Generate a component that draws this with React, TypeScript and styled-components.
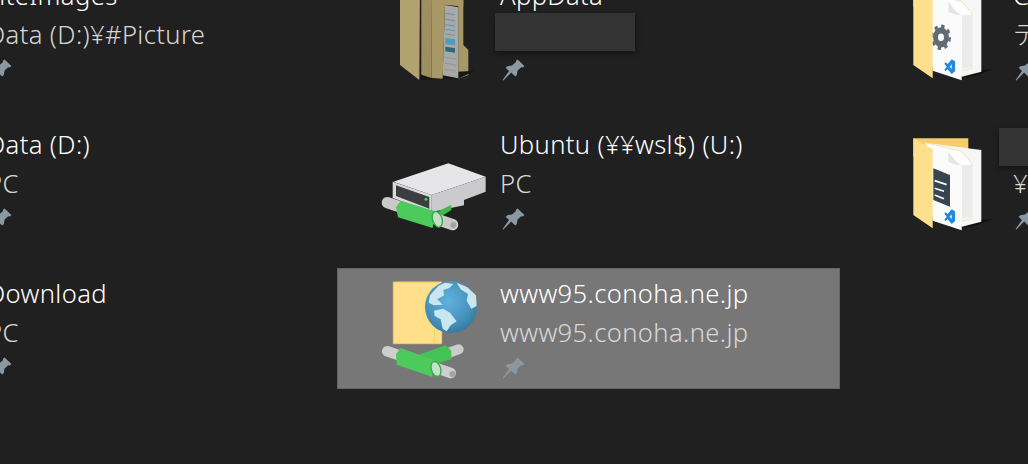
import React from "react";
import styled, { createGlobalStyle } from "styled-components";

const GlobalStyle = createGlobalStyle`
  html, body {
    margin: 0;
    height: 100%;
    background: #202020;
  }
`;

const Viewport = styled.div`
  width: 1028px;
  height: 464px;
  overflow: hidden;
  background: #202020;
  font-family: "Noto Sans", "Noto Sans CJK JP", sans-serif;
`;

const TileGrid = styled.div`
  display: grid;
  grid-template-columns: repeat(3, 503px);
  grid-auto-rows: 121px;
  gap: 28px 10px;
  margin: -30px 0 0 -176px;
`;

const Tile = styled.div<{ $selected?: boolean }>`
  box-sizing: border-box;
  display: flex;
  border: 1px solid ${(p) => (p.$selected ? "#646464" : "transparent")};
  background: ${(p) => (p.$selected ? "#777777" : "transparent")};
`;

const IconSlot = styled.svg`
  flex: none;
  width: 150px;
  height: 119px;
`;

const TileText = styled.div`
  display: flex;
  flex-direction: column;
  margin-left: 12px;
  padding-top: 7px;
`;

const Title = styled.div`
  position: relative;
  height: 39px;
  font-size: 25.6px;
  font-weight: 300;
  letter-spacing: 0.37px;
  line-height: 36px;
  color: #ffffff;
  white-space: nowrap;
`;

const Subtitle = styled(Title)<{ $selected?: boolean }>`
  color: ${(p) => (p.$selected ? "#d8d8d8" : "#d6d6d6")};
`;

const PinIcon = styled.svg`
  width: 23px;
  height: 23px;
  margin: 3px 0 0 2px;
  fill: #8a98a2;
`;

// patches that hide private names in the screenshot
const Redaction = styled.div<{ $width: number; $left: number; $top: number }>`
  position: absolute;
  left: ${(p) => p.$left}px;
  top: ${(p) => p.$top}px;
  width: ${(p) => p.$width}px;
  height: 38px;
  background: #333333;
  box-shadow: 0 2px 6px rgba(0, 0, 0, 0.45);
`;

const Pin = () => (
  <PinIcon viewBox="0 0 23 23">
    <path d="M15.6 0.4 22.4 7 20.8 8.4 19.2 8.2 15.6 11.6 14.8 16 13.2 17.6 9.2 13.6 1.4 21.6 0.6 21 7 12 3.6 8.8 5.4 7.2 10 6.6 14 3 13.9 1.8Z" />
  </PinIcon>
);

// the cable under a network location; drawn in the coordinates of the globe icon
const NetworkPipes = () => (
  <g>
    <path d="M280 300 386 262" stroke="#cbcbc9" strokeWidth="30" strokeLinecap="round" />
    <path d="M266 278 346 250 364 266 364 292 302 310 270 302Z" fill="#42c353" />
    <path d="M172 268 362 333" stroke="#cececc" strokeWidth="32" strokeLinecap="round" />
    <circle cx="367" cy="336" r="9" fill="#a4a4a2" />
    <path d="M212 258 318 296 306 344 200 308 198 276Z" fill="#4ccb5c" />
    <ellipse cx="318" cy="321" rx="14" ry="23" transform="rotate(-18 318 321)" fill="#c6dfc9" stroke="#2fae44" strokeWidth="4" />
  </g>
);

const NetworkDriveIcon = () => (
  <IconSlot viewBox="1 1 150 119">
    <g transform="translate(33 1) scale(0.3333)">
      <path d="M70 185 235 130 347 170 185 225Z" fill="#e6e6e8" />
      <path d="M185 225 347 170V215L282 240V256L185 276Z" fill="#cbcbce" />
      <path d="M68 185 185 225V276L68 234Z" fill="#d8d8da" />
      <path d="M78 196 178 231V266L78 228Z" fill="#3c3d40" />
      <circle cx="168" cy="238" r="4.5" fill="#2edb4a" />
      <path d="M190 282 244 254V270L200 298Z" fill="#3bbb4e" />
      <path d="M52 248 248 314" stroke="#cacac8" strokeWidth="34" strokeLinecap="round" />
      <circle cx="250" cy="315" r="9" fill="#a4a4a2" />
      <path d="M92 242 196 274 188 324 84 292 78 262Z" fill="#4ccb5c" />
      <ellipse cx="202" cy="298" rx="14" ry="24" transform="rotate(-18 202 298)" fill="#c6dfc9" stroke="#2fae44" strokeWidth="4" />
    </g>
  </IconSlot>
);

const SiteIcon = () => (
  <IconSlot viewBox="1 1 150 119">
    <defs>
      <radialGradient id="globe" cx="45%" cy="38%" r="70%">
        <stop offset="0" stopColor="#5fb3de" />
        <stop offset="0.65" stopColor="#4590ba" />
        <stop offset="1" stopColor="#2f7196" />
      </radialGradient>
    </defs>
    <g transform="translate(-7 -6) scale(0.3333)">
      <path d="M190 60H335V245H190Z" fill="#ffdf8a" stroke="#f5cb62" strokeWidth="3" />
      <path d="M314 190V244" stroke="#f1c862" strokeWidth="2" />
      <circle cx="363" cy="135" r="78" fill="url(#globe)" />
      <path d="M300 100 325 72 345 62 370 66 358 78 340 84 342 100 322 112 338 128 312 130 296 122Z" fill="#c9e6f1" />
      <path d="M312 146 340 140 360 152 380 178 362 190 350 208 338 200 332 172 314 162Z" fill="#c9e6f1" />
      <path d="M380 62 412 76 438 100 440 132 424 140 410 116 414 96 392 82Z" fill="#c9e6f1" />
      <NetworkPipes />
    </g>
  </IconSlot>
);

const DimFolderIcon = () => (
  <IconSlot viewBox="1 1 150 119">
    <g transform="translate(43 30) scale(0.3333)">
      <path d="M235 -60H250V135L265 150V225L235 236Z" fill="#a89866" />
      <path d="M118 222 285 212 235 236 118 240Z" fill="#161616" />
      <path d="M195 15 235 22V235L188 226Z" fill="#a8a9a7" />
      {[40, 58, 74, 88, 102].map((y) => (
        <path key={y} d={`M196 ${y} 225 ${y + 4}`} stroke="#4f93ad" strokeWidth="2.5" />
      ))}
      <path d="M196 114 225 118V136L196 132Z" fill="#4f9cc0" />
      <path d="M196 140 225 144V158L196 154Z" fill="#33667a" />
      {[172, 190, 208].map((y) => (
        <path key={y} d={`M194 ${y} 228 ${y + 5}`} stroke="#8a8b89" strokeWidth="2" />
      ))}
      <path d="M153 -60H250V20L195 14 188 236 155 234Z" fill="#a89866" />
      <path d="M124 -60H153L155 234 124 224Z" fill="#9f8f60" />
      <path d="M60 -70H120L118 240 60 195Z" fill="#b2a26f" />
    </g>
  </IconSlot>
);

const VsLogo = () => (
  <path
    fillRule="evenodd"
    d="M155 268 165 274V304L155 312 143 298 137 303 133 299 140 290 133 281 137 277 143 282ZM155 283 149 290 155 297Z"
    fill="#1f8ae0"
  />
);

const CodeFolderIcon = ({ glyph, dy }: { glyph: "gear" | "file"; dy: number }) => (
  <IconSlot viewBox="1 1 150 119">
    <g transform={`translate(50 ${dy}) scale(0.3333)`}>
      <path d="M40 55H205V110H40Z" fill="#f6cd6a" />
      <path d="M232 300 282 296 240 312 186 326Z" fill="#111111" />
      <path d="M75 68 244 90V305L185 320Z" fill="#f6f6f6" />
      <path d="M75 68 185 94 215 130V295L186 302Z" fill="#ffffff" stroke="#e8d79e" strokeWidth="2" />
      <path d="M185 135H214V292L186 298Z" fill="#ebebeb" />
      <path d="M75 76 145 95 185 135V331L98 302Z" fill="#fbfbfb" />
      <path d="M145 95 168 125 185 135 168 134 145 125Z" fill="#e4e4e4" />
      {glyph === "gear" ? (
        <g transform="translate(123 202) scale(0.82 1.05)">
          <circle r="20" fill="none" stroke="#5f6c74" strokeWidth="18" />
          <circle r="32" fill="none" stroke="#5f6c74" strokeWidth="9" strokeDasharray="12 13.1" />
        </g>
      ) : (
        <g>
          <path d="M100 145 150 165V260L100 240Z" fill="#36454f" />
          <path d="M104 182 140 194M104 205 132 214M104 225 132 236" stroke="#ffffff" strokeWidth="5" />
        </g>
      )}
      <VsLogo />
      <path d="M40 55 98 88V325L40 285Z" fill="#fedf8b" />
    </g>
  </IconSlot>
);

type TileData = {
  icon: React.ReactNode;
  title: string;
  sub: string;
  selected?: boolean;
  cover?: { width: number; left: number; top: number };
  coverSub?: { width: number; left: number; top: number };
};

const tiles: TileData[] = [
  { icon: null, title: "siteImages", sub: "Data (D:)¥#Picture" },
  {
    icon: <DimFolderIcon />,
    title: "AppData",
    sub: "",
    coverSub: { width: 140, left: -5, top: -4 },
  },
  { icon: <CodeFolderIcon glyph="gear" dy={0} />, title: "Code", sub: "デスクトップ" },
  { icon: null, title: "Data (D:)", sub: "PC" },
  { icon: <NetworkDriveIcon />, title: "Ubuntu (¥¥wsl$) (U:)", sub: "PC" },
  {
    icon: <CodeFolderIcon glyph="file" dy={1} />,
    title: "",
    sub: "¥¥",
    cover: { width: 60, left: -14, top: 1 },
  },
  { icon: null, title: "Download", sub: "PC" },
  { icon: <SiteIcon />, title: "www95.conoha.ne.jp", sub: "www95.conoha.ne.jp", selected: true },
];

export default function App() {
  return (
    <Viewport>
      <GlobalStyle />
      <TileGrid>
        {tiles.map((t, i) => (
          <Tile key={i} $selected={t.selected}>
            {t.icon ?? <IconSlot />}
            <TileText>
              <Title>
                {t.title}
                {t.cover && <Redaction $width={t.cover.width} $left={t.cover.left} $top={t.cover.top} />}
              </Title>
              <Subtitle $selected={t.selected}>
                {t.sub}
                {t.coverSub && (
                  <Redaction $width={t.coverSub.width} $left={t.coverSub.left} $top={t.coverSub.top} />
                )}
              </Subtitle>
              <Pin />
            </TileText>
          </Tile>
        ))}
      </TileGrid>
    </Viewport>
  );
}
